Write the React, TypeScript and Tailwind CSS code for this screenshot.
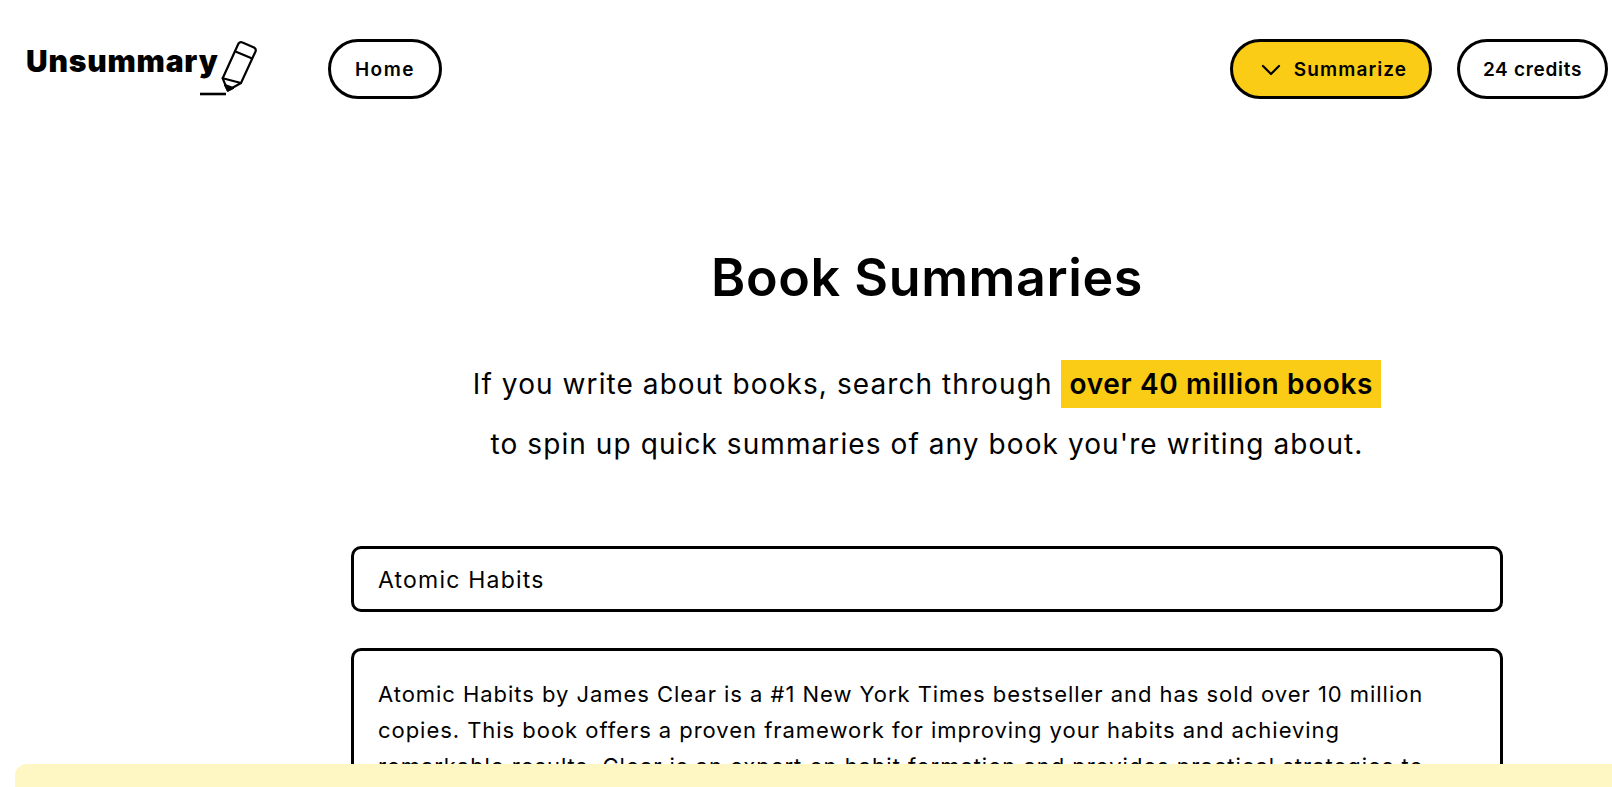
import React from 'react';

const PencilLogo = () => (
  <svg width="60" height="56" viewBox="0 0 60 56" fill="none" stroke="#000" strokeWidth="2.2" strokeLinejoin="round" strokeLinecap="round" className="shrink-0 -ml-[20px] mt-[2px]">
    <path d="M39.5 2.5 Q41 0.5 43.5 1.5 L55 6.5 Q57.5 8 56.5 10.5 L42 42 L28.7 49.5 L23.7 37.3 Z" />
    <path d="M37 10.7 L52 17" />
    <path d="M23.7 37.3 L42 42" />
    <path d="M26 44 L34 47 L29 49.5 Z" fill="#000" />
    <path d="M1 53 H27" strokeWidth="2.6" strokeLinecap="butt" />
  </svg>
);

const PillButton = ({ children, className }: { children: React.ReactNode; className: string }) => (
  <button className={`flex items-center justify-center h-[60px] pt-[2px] rounded-full border-[3px] border-black text-[19px] font-semibold text-black ${className}`}>
    {children}
  </button>
);

export default function App() {
  return (
    <div className="relative h-[787px] overflow-hidden bg-white font-['Inter',sans-serif] text-black">
      <header className="flex items-start justify-between pt-[39px] pr-[4px]">
        <div className="flex items-start">
          <div className="flex w-[328px] items-start pl-[26px]">
            <div className="mt-[2px] text-[30px] leading-[40px] font-black tracking-[0.8px]">Unsummary</div>
            <PencilLogo />
          </div>
          <PillButton className="w-[114px] tracking-[1.5px]">Home</PillButton>
        </div>
        <div className="flex gap-[25px]">
          <PillButton className="w-[202px] gap-[11px] pl-[4px] bg-[#facc15] tracking-[1.1px]">
            <svg width="24" height="24" viewBox="0 0 24 24" fill="none" stroke="#000" strokeWidth="2.2" strokeLinecap="round" strokeLinejoin="round"><path d="M4 8l8 8 8-8" /></svg>
            Summarize
          </PillButton>
          <PillButton className="w-[151px] tracking-[0.7px]">24 credits</PillButton>
        </div>
      </header>

      <main className="pl-[351px] pr-[109px] pt-[147px]">
        <h1 className="text-center text-[52px] leading-[64px] font-semibold tracking-[0.6px]">Book Summaries</h1>
        <p className="mt-[44px] text-center text-[28px] leading-[60px] font-normal tracking-[1.08px]">
          If you write about books, search through <span className="inline-block px-[8px] h-[48px] leading-[48px] bg-[#facc15] font-semibold tracking-[0.65px]">over 40 million books</span>
          <br />
          to spin up quick summaries of any book you're writing about.
        </p>
        <div className="mt-[72px] h-[66px] flex items-center px-[24px] pt-[2px] rounded-[10px] border-[3px] border-black text-[23px] font-normal tracking-[1.2px]">Atomic Habits</div>
        <div className="mt-[36px] pl-[24px] pr-[44px] pt-[25px] pb-[25px] rounded-[10px] border-[3px] border-black text-[22px] leading-[36px] font-normal tracking-[0.96px]">
          Atomic Habits by James Clear is a #1 New York Times bestseller and has sold over 10 million copies. This book offers a proven framework for improving your habits and achieving remarkable results. Clear is an expert on habit formation and provides practical strategies to
        </div>
      </main>

      <div className="absolute left-[15px] right-0 bottom-0 h-[23px] rounded-tl-[12px] bg-[#fef7c3]" />
    </div>
  );
}
